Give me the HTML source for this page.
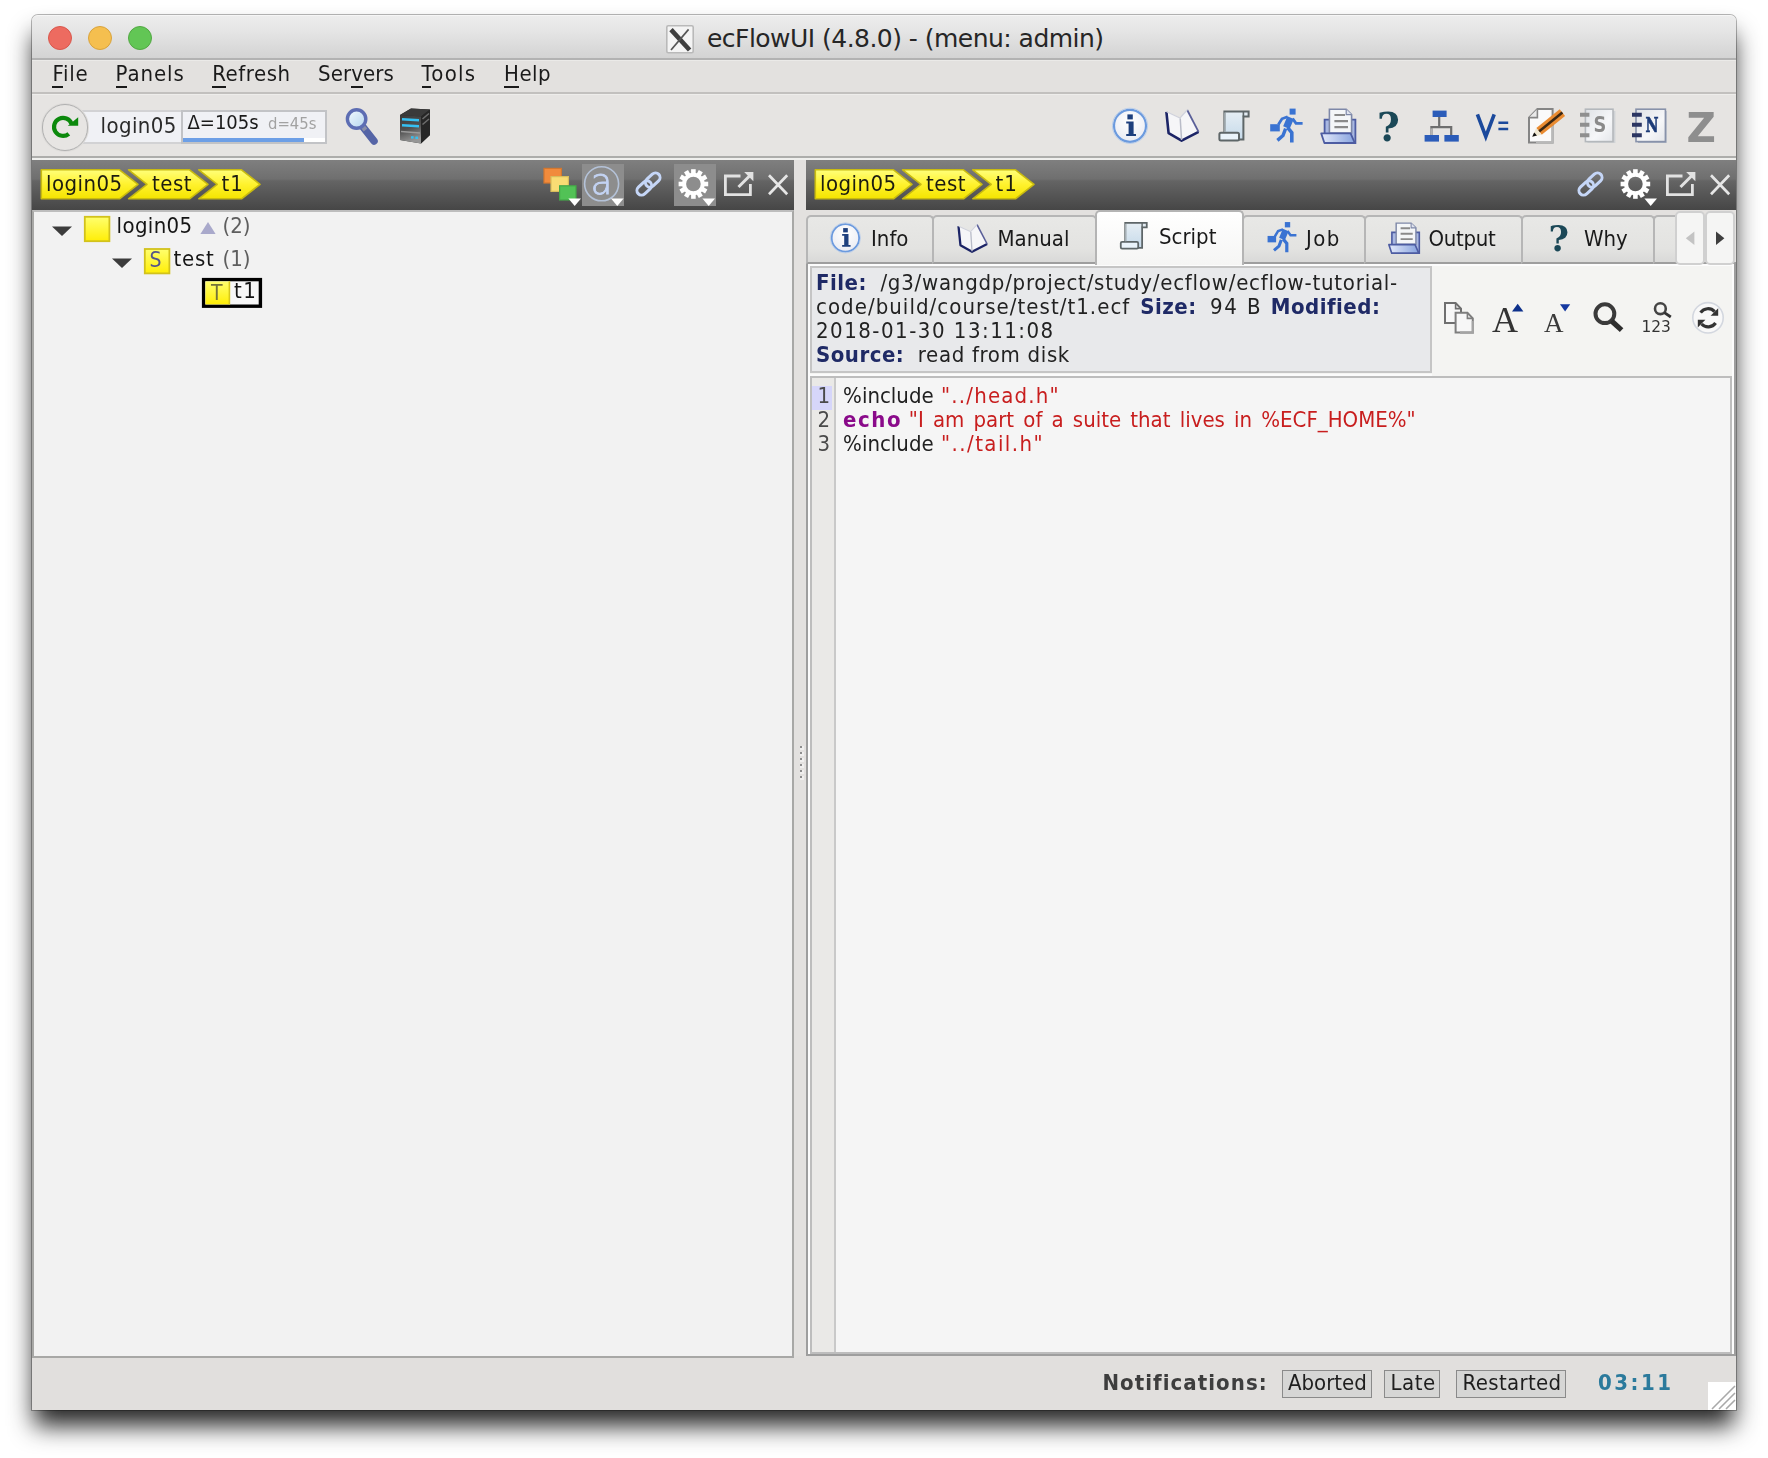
<!DOCTYPE html>
<html lang="en">
<head>
<meta charset="utf-8">
<title>ecFlowUI (4.8.0) - (menu: admin)</title>
<style>
*{box-sizing:border-box;margin:0;padding:0}
html,body{width:1768px;height:1458px;background:#fff;overflow:hidden}
body{position:relative;font-family:"DejaVu Sans Condensed","DejaVu Sans","Liberation Sans",sans-serif;font-size:22px;color:#1a1a1a}
.a{position:absolute}
.t,svg{filter:blur(.6px)}
#ttext{filter:none}
.t{position:absolute;white-space:pre;line-height:normal}
#win{position:absolute;left:32px;top:15px;width:1704px;height:1395px;background:#e3e1df;border-radius:6px 6px 0 0;
 box-shadow:0 17.5px 24px -2px rgba(0,0,0,.85),0 0 0 1px rgba(0,0,0,.28)}
#x{position:absolute;left:-32px;top:-15px;width:1768px;height:1458px}
#title{position:absolute;left:32px;top:15px;width:1704px;height:43px;border-radius:6px 6px 0 0;
 background:linear-gradient(#ededed,#e4e4e4 40%,#d3d3d3);border-top:1px solid #f6f6f6}
#titleline{left:32px;top:58px;width:1704px;height:2px;background:#b2b2b2}
.tl{position:absolute;top:26px;width:24px;height:24px;border-radius:50%}
#menubar{left:32px;top:60px;width:1704px;height:32px;background:#e3e1df;border-top:1px solid #ebeae8}
#menuline{left:32px;top:92px;width:1704px;height:2px;background:#c2c0be}
#toolbar{left:32px;top:94px;width:1704px;height:62px;background:#e6e4e2;border-top:1px solid #eeedeb}
#toolline{left:32px;top:156px;width:1704px;height:2px;background:#adadab}
#toolline2{left:32px;top:158px;width:1704px;height:2px;background:#efefed}
.hdr{position:absolute;top:160px;height:50px;background:linear-gradient(#7f7f7f,#6f6f6f 38%,#646464 42%,#464646)}
.tab{position:absolute;top:215px;height:49px;background:linear-gradient(#e8e8e6,#e3e3e1 70%,#d9d9d8);border:2px solid #b6b6b6;border-bottom:2px solid #9e9e9e;border-radius:5px 5px 0 0}
.info{line-height:24px;color:#222}
.info b{color:#1f2a66;letter-spacing:.5px}
.code{line-height:24px;color:#202020}
.code i{font-style:normal;color:#c81e1e}
.code b{color:#8a0a8a}
.btn{top:1370px;height:28px;background:#d6d6d5;border:1.5px solid #8a8a8a}
.menu u{text-decoration:none;border-bottom:2px solid #1a1a1a;padding-bottom:0}
</style>
</head>
<body>
<div id="win"><div id="x">

<!-- TITLE BAR -->
<div id="title"></div>
<div class="a" id="titleline"></div>
<div class="tl" style="left:48px;background:#ed6b60;border:1px solid #d9574c"></div>
<div class="tl" style="left:88px;background:#f5bf4f;border:1px solid #d9a33c"></div>
<div class="tl" style="left:128px;background:#62c655;border:1px solid #52a843"></div>
<svg class="a" style="left:664px;top:23px" width="32" height="32" viewBox="664 23 32 32"><rect x="666.8" y="25.8" width="26.4" height="27" rx="1.5" fill="#f4f4f4" stroke="#b9b9b9" stroke-width="1.6"/><path d="M671 29.6L689.6 50" stroke="#3e3e3e" stroke-width="4.6"/><path d="M688.6 29.4L671 50" stroke="#555" stroke-width="1.7"/></svg>
<div class="t" id="ttext" style="font-family:'DejaVu Sans','Liberation Sans',sans-serif;left:707px;top:24px;font-size:25px;letter-spacing:-.53px;color:#262626">ecFlowUI (4.8.0) - (menu: admin)</div>

<!-- MENU BAR -->
<div class="a" id="menubar"></div>
<div class="a" id="menuline"></div>
<div class="t menu" style="left:52.4px;top:61px;letter-spacing:.8px"><u>F</u>ile</div>
<div class="t menu" style="left:115.6px;top:61px;letter-spacing:.9px"><u>P</u>anels</div>
<div class="t menu" style="left:212.2px;top:61px;letter-spacing:.55px"><u>R</u>efresh</div>
<div class="t menu" style="left:318px;top:61px;letter-spacing:.1px">Ser<u>v</u>ers</div>
<div class="t menu" style="left:421.6px;top:61px;letter-spacing:1.3px"><u>T</u>ools</div>
<div class="t menu" style="left:504px;top:61px;letter-spacing:.5px"><u>H</u>elp</div>

<!-- TOOLBAR -->
<div class="a" id="toolbar"></div>
<div class="a" id="toolline"></div>
<div class="a" id="toolline2"></div>
<!-- server widget -->
<div class="a" style="left:76px;top:110px;width:107px;height:34px;background:#f0f1f5;border:2px solid #d2d2d4;border-right:none"></div>
<div class="a" style="left:181px;top:110px;width:146px;height:34px;background:#f0f1f5;border:2px solid #c2c3c6"></div>
<div class="a" style="left:183px;top:138px;width:142px;height:4px;background:#fff"></div>
<div class="a" style="left:183px;top:138px;width:121px;height:4px;background:#6d9fe6"></div>
<div class="a" style="left:41.6px;top:104.4px;width:46.6px;height:46.6px;border-radius:50%;background:#e7e5e3;border:1.7px solid #b0b0b0;box-shadow:0 0 0 1px #dddbd9"></div>
<svg class="a" style="left:48px;top:110px" width="34" height="34" viewBox="48 110 34 34"><path d="M71.5 123.8A9 9 0 1 0 68.8 133.8" fill="none" stroke="#0c890c" stroke-width="4.2"/><path d="M67.8 125.8H78.2V117.2Z" fill="#0c890c"/></svg>
<div class="t" style="left:100.6px;top:113px;color:#2a2a2a;letter-spacing:.4px">login05</div>
<div class="t" style="left:187.5px;top:110px;font-size:20px;color:#1a1a1a">Δ=105s</div>
<div class="t" style="left:268px;top:114px;font-size:16.5px;color:#a2a2a2">d=45s</div>
<!-- search icon -->
<svg class="a" style="left:342px;top:105px" width="40" height="42" viewBox="0 0 40 42">
<defs><linearGradient id="lens" x1="0" y1="0" x2="1" y2="1"><stop offset="0" stop-color="#f4fbff"/><stop offset="1" stop-color="#b4d4ee"/></linearGradient></defs>
<path d="M21 22L32 36" stroke="#5564a6" stroke-width="7.5" stroke-linecap="round"/>
<path d="M19 19.5L23.5 25" stroke="#8a8fa8" stroke-width="4.5"/>
<circle cx="14.6" cy="14" r="9.2" fill="url(#lens)" stroke="#5d6db3" stroke-width="3.4"/>
</svg>
<!-- server icon -->
<svg class="a" style="left:397px;top:106px" width="36" height="40" viewBox="0 0 36 40">
<defs><linearGradient id="srvf" x1="0" y1="0" x2=".25" y2="1"><stop offset="0" stop-color="#383838"/><stop offset=".55" stop-color="#505050"/><stop offset="1" stop-color="#969696"/></linearGradient></defs>
<path d="M3 9L14 2.5L33 3.5L33 29L24 37.5L3 34Z" fill="#2b2b2b"/>
<path d="M3 9L24 10.5L24 37.5L3 34Z" fill="url(#srvf)"/>
<path d="M3 9L14 2.5L33 3.5L24 10.5Z" fill="#3a3a3a"/>
<path d="M24 10.5L33 3.5L33 29L24 37.5Z" fill="#262626"/>
<path d="M5 13.2L22 14.2" stroke="#35c0f2" stroke-width="2.4"/>
<path d="M5 19.2L22 20.2" stroke="#35c0f2" stroke-width="2.4"/>
<path d="M4 25.5L23 27" stroke="#9a9a9a" stroke-width="1.6"/>
<path d="M25.5 13L32 7.5M25.5 18.5L32 13" stroke="#6c6c6c" stroke-width="1.6"/>
<rect x="14" y="30.2" width="2.6" height="2.4" fill="#35c0f2"/><rect x="18.4" y="30.6" width="2.6" height="2.4" fill="#35c0f2"/>
</svg>

<!-- toolbar right icons -->
<svg class="a" style="left:1100px;top:100px" width="630" height="52" viewBox="1100 100 630 52">
<defs>
<radialGradient id="ig" cx=".5" cy=".35" r=".7"><stop offset="0" stop-color="#ffffff"/><stop offset="1" stop-color="#e8eaf2"/></radialGradient>
<linearGradient id="scr" x1="0" y1="0" x2="0" y2="1"><stop offset="0" stop-color="#e6eef4"/><stop offset="1" stop-color="#c6daea"/></linearGradient>
<linearGradient id="tray" x1="0" y1="0" x2="1" y2="0"><stop offset="0" stop-color="#e4eafa"/><stop offset="1" stop-color="#86a2de"/></linearGradient>
<linearGradient id="nb" x1="0" y1="0" x2="1" y2="1"><stop offset="0" stop-color="#dfe2e6"/><stop offset=".6" stop-color="#f6f7f9"/><stop offset="1" stop-color="#e4e6ea"/></linearGradient>
</defs>
<!-- info -->
<g id="i-info"><circle cx="1130" cy="125.8" r="16" fill="url(#ig)" stroke="#6b9ade" stroke-width="2.2"/><circle cx="1130" cy="125.8" r="17.6" fill="none" stroke="#b9cdea" stroke-width="1"/>
<rect x="1127.4" y="114.4" width="5.4" height="5" fill="#1d3f7d"/><path d="M1126.2 121.4H1133.6V134H1136V136H1126.2V134H1128.6V123.4H1126.2Z" fill="#1d3f7d"/></g>
<!-- manual/book -->
<g id="i-book"><path d="M1166.2 111.6L1180 118L1187.2 109.6L1198.8 132.2L1181.6 141L1168 133.4Z" fill="#f6f6f8"/>
<path d="M1166.4 111.8L1168.6 133.2L1181.6 140.6L1198.6 131.8" fill="none" stroke="#1c2466" stroke-width="2.6" stroke-linejoin="round"/>
<path d="M1198.6 131.8L1187.2 110" stroke="#5a5f98" stroke-width="1.8"/><path d="M1180.2 118.4L1181.6 140" stroke="#b9bcc8" stroke-width="1.5"/><path d="M1166.6 111.8L1180 118L1187.2 110" fill="none" stroke="#d0d2dc" stroke-width="1.2"/></g>
<!-- script -->
<g id="i-script"><path d="M1224.4 111.4H1248.6V116.4H1243.4V139.6H1224.4Z" fill="url(#scr)" stroke="#5e6668" stroke-width="2"/><path d="M1243.4 116.4V111.4" stroke="#5e6668" stroke-width="1.6"/>
<rect x="1219.4" y="132.8" width="19.6" height="7.6" rx="1.5" fill="#eaf3fa" stroke="#5e6668" stroke-width="2"/><path d="M1225 112.4V132" stroke="#a9b3b8" stroke-width="1.6"/></g>
<!-- job/runner -->
<g id="i-run" fill="#3a73d2" stroke="#3a73d2"><rect x="1289.6" y="108.6" width="6" height="6" stroke="none"/>
<path d="M1290.6 117.6L1286.4 127.6" stroke-width="7" fill="none"/><path d="M1292.6 118.6L1296 123.4H1302.6" stroke-width="2.8" fill="none"/><path d="M1287.6 116.8L1282 118.8L1278.4 124.6" stroke-width="2.8" fill="none"/>
<rect x="1270.2" y="124.2" width="9.6" height="7.2" stroke="none"/><path d="M1287.6 127.6L1291.8 132.6V142.6" stroke-width="3.6" fill="none"/><path d="M1285.6 128.6L1283 135.6L1277.4 140.4" stroke-width="3.4" fill="none"/></g>
<!-- output -->
<g id="i-out"><path d="M1324.6 134V119.6H1355.4V143H1352" fill="#a9b8e2" stroke="#4d5ca2" stroke-width="1.8"/>
<path d="M1329.4 109.2H1346.2L1351.6 114.6V133H1329.4Z" fill="#f4f6f8" stroke="#7e88a8" stroke-width="1.6"/><path d="M1346.2 109.2V114.6H1351.6" fill="#dfe3ee" stroke="#7e88a8" stroke-width="1.2"/>
<path d="M1334.4 115H1345M1334.4 121.2H1348M1334.4 127.2H1348" stroke="#8a8a8a" stroke-width="2.2"/>
<path d="M1321.2 133.4H1350.6L1354.8 143H1324.4Z" fill="url(#tray)" stroke="#4d5ca2" stroke-width="1.8" stroke-linejoin="round"/></g>
<text x="1377" y="141.4" font-family="DejaVu Serif, Liberation Serif, serif" font-weight="bold" font-size="39" fill="#1b4857">?</text>
<!-- tree -->
<g id="i-tree"><path d="M1439.2 116V127.2M1431.4 135V127.2H1451.2V135" fill="none" stroke="#6e6e6e" stroke-width="2.2"/><path d="M1431.4 135V128.4" stroke="#b4b4b4" stroke-width="2.2"/>
<rect x="1432.6" y="110.6" width="14" height="6.4" fill="#2b5cb9"/><rect x="1424.6" y="135" width="14.4" height="6.6" fill="#2b5cb9"/><rect x="1444.4" y="135" width="14.4" height="6.6" fill="#2b5cb9"/></g>
<!-- V= -->
<path d="M1477.4 114.4L1485.8 136.6L1494.2 114.4" fill="none" stroke="#1b499c" stroke-width="3.6" stroke-linejoin="miter"/><path d="M1498.4 122.8H1508.2M1498.4 129H1508.2" stroke="#1b499c" stroke-width="2.6"/>
<!-- edit -->
<g id="i-edit"><path d="M1537.4 109H1552.6V142.4H1529V117.6Z" fill="#fafafa" stroke="#858585" stroke-width="2"/><path d="M1537.4 109V117.6H1529" fill="#e9e9e9" stroke="#858585" stroke-width="1.6"/>
<path d="M1552.6 126V142.4H1536" fill="none" stroke="#b9b9b9" stroke-width="2.4"/>
<path d="M1539 131.4L1562.4 112.6" stroke="#e98b31" stroke-width="8.6"/><path d="M1539 131.4L1562.4 112.6" stroke="#3c2814" stroke-width="2.6"/>
<path d="M1532.2 136.8L1536.2 128L1541.8 134.8Z" fill="#f0e8d2"/><path d="M1532.2 136.8L1534.2 132.4L1537 135.6Z" fill="#111"/></g>
<!-- S notebook -->
<g id="i-snb"><rect x="1587.4" y="111" width="28" height="32" fill="#d0d3d6"/><rect x="1585.4" y="109.2" width="27.6" height="32.4" fill="url(#nb)" stroke="#b4b8bc" stroke-width="1.6"/>
<path d="M1580 114.8H1589.4M1580 124.8H1589.4M1580 135.2H1589.4" stroke="#8f8f8f" stroke-width="4"/></g>
<text x="1593.4" y="131.8" font-family="DejaVu Sans, Liberation Sans, sans-serif" font-weight="bold" font-size="21" fill="#8a8a8a" textLength="12.8" lengthAdjust="spacingAndGlyphs">S</text>
<!-- N notebook -->
<g id="i-nnb"><rect x="1638" y="111" width="28.6" height="32" fill="#aab2c2"/><rect x="1636" y="109.2" width="29.4" height="32.4" fill="url(#nb)" stroke="#8892aa" stroke-width="1.6"/>
<path d="M1632 114.8H1641.8M1632 124.8H1641.8M1632 135.2H1641.8" stroke="#2b3562" stroke-width="4"/></g>
<text x="1645.4" y="131.8" font-family="DejaVu Serif, Liberation Serif, serif" font-weight="bold" font-size="21" fill="#1c3b78" stroke="#1c3b78" stroke-width=".7" textLength="13" lengthAdjust="spacingAndGlyphs">N</text>
<text x="1686.6" y="141.6" font-family="DejaVu Sans, Liberation Sans, sans-serif" font-weight="bold" font-size="40" fill="#8e8e8e" textLength="29.4" lengthAdjust="spacingAndGlyphs">Z</text>
</svg>

<!-- LEFT PANEL -->
<div class="hdr" style="left:32px;width:762px"></div>
<div class="a" style="left:32px;top:210px;width:762px;height:1148px;background:#f2f2f2;border:2px solid #a8a8a6;border-top:2px solid #bdbdbd"></div>
<!-- left breadcrumbs -->
<svg class="a" style="left:32px;top:160px" width="260" height="50" viewBox="32 160 260 50">
<defs><linearGradient id="yg" x1="0" y1="0" x2="0" y2="1"><stop offset="0" stop-color="#ffff7a"/><stop offset=".5" stop-color="#fff22e"/><stop offset="1" stop-color="#f4e400"/></linearGradient></defs>
<g fill="url(#yg)" stroke="#c9bb10" stroke-width="1.6" stroke-linejoin="round">
<path d="M41.3 169.8H119.5L138 184.3L119.5 198.8H41.3Z"/>
<path d="M128.6 169.8H189.5L208 184.3L189.5 198.8H128.6L147 184.3Z"/>
<path d="M198.8 169.8H241.5L260 184.3L241.5 198.8H198.8L217.2 184.3Z"/>
</g></svg>
<div class="t" style="left:46px;top:171px;color:#1c1c10;letter-spacing:.45px">login05</div>
<div class="t" style="left:152px;top:171px;color:#1c1c10;letter-spacing:.5px">test</div>
<div class="t" style="left:221.6px;top:171px;color:#1c1c10;letter-spacing:1px">t1</div>
<!-- left header icons -->
<svg class="a" style="left:540px;top:160px" width="254" height="50" viewBox="0 0 254 50">
<rect x="42" y="4" width="42" height="42" fill="#8d8d8d"/>
<rect x="134" y="4" width="42" height="42" fill="#8d8d8d"/>
<rect x="4" y="8.4" width="17.4" height="14.6" fill="#f18b3c" stroke="#d4772e" stroke-width="1.2"/>
<rect x="11" y="16.6" width="17.4" height="14.8" fill="#f9dc74" stroke="#d8bc5c" stroke-width="1.2"/>
<rect x="19.6" y="25.8" width="16.4" height="14.2" fill="#52c256" stroke="#44a648" stroke-width="1.2"/>
<path d="M28.4 38.6H41L34.7 46Z" fill="#fff"/>
<circle cx="61.6" cy="23.8" r="17" fill="none" stroke="#b4c2d8" stroke-width="1.6"/>
<text x="61.4" y="34" font-family="DejaVu Sans, Liberation Sans, sans-serif" font-weight="200" font-size="35" fill="#c3d3f3" stroke="#c3d3f3" stroke-width=".9" text-anchor="middle">a</text>
<path d="M71 38.6H83.6L77.3 46Z" fill="#fff"/>
<g fill="none" stroke="#c5d6f7" stroke-width="3" transform="rotate(-43 108.5 24)"><rect x="94.4" y="19.4" width="16.6" height="9.2" rx="4.6"/><rect x="106" y="19.4" width="16.6" height="9.2" rx="4.6"/></g>
<g transform="translate(153.4 24)"><g fill="#fff"><rect x="-2.3" y="-14.8" width="4.6" height="5.6" transform="rotate(0)"/><rect x="-2.3" y="-14.8" width="4.6" height="5.6" transform="rotate(30)"/><rect x="-2.3" y="-14.8" width="4.6" height="5.6" transform="rotate(60)"/><rect x="-2.3" y="-14.8" width="4.6" height="5.6" transform="rotate(90)"/><rect x="-2.3" y="-14.8" width="4.6" height="5.6" transform="rotate(120)"/><rect x="-2.3" y="-14.8" width="4.6" height="5.6" transform="rotate(150)"/><rect x="-2.3" y="-14.8" width="4.6" height="5.6" transform="rotate(180)"/><rect x="-2.3" y="-14.8" width="4.6" height="5.6" transform="rotate(210)"/><rect x="-2.3" y="-14.8" width="4.6" height="5.6" transform="rotate(240)"/><rect x="-2.3" y="-14.8" width="4.6" height="5.6" transform="rotate(270)"/><rect x="-2.3" y="-14.8" width="4.6" height="5.6" transform="rotate(300)"/><rect x="-2.3" y="-14.8" width="4.6" height="5.6" transform="rotate(330)"/></g><circle r="9.3" fill="none" stroke="#fff" stroke-width="4"/></g>
<path d="M162.4 38.6H175L168.7 46Z" fill="#fff"/>
<path d="M200.5 16H185.4V34.6H210.4V24" fill="none" stroke="#e2e2e2" stroke-width="2.8"/>
<path d="M198.5 27L210 15.5" stroke="#e2e2e2" stroke-width="3"/><path d="M204.2 12H213.4V21.2Z" fill="#e2e2e2"/>
<path d="M229 15.2L247.2 34.2M247.2 15.2L229 34.2" stroke="#e6e6e6" stroke-width="2.7"/>
</svg>
<!-- tree -->
<svg class="a" style="left:32px;top:212px" width="300" height="100" viewBox="32 212 300 100">
<defs><linearGradient id="yg2" x1="0" y1="0" x2="0" y2="1"><stop offset="0" stop-color="#ffff6e"/><stop offset="1" stop-color="#ffee06"/></linearGradient></defs>
<path d="M52 226.4H72L62 236Z" fill="#3c3c3c"/>
<path d="M112 258.4H132L122 268Z" fill="#3c3c3c"/>
<rect x="84.8" y="216.8" width="24.6" height="24.4" fill="url(#yg2)" stroke="#d2c21c" stroke-width="1.8"/>
<rect x="144.8" y="249" width="24.6" height="24.4" fill="url(#yg2)" stroke="#d2c21c" stroke-width="1.8"/>
<path d="M200.4 234L208 222L215.6 234Z" fill="#a9a9cb"/>
<rect x="203.6" y="279.6" width="56.8" height="26.6" fill="#f7f7f7" stroke="#000" stroke-width="3.4"/>
<rect x="205.4" y="281.4" width="24.6" height="23" fill="url(#yg2)"/>
<rect x="228.6" y="281.4" width="1.6" height="23" fill="#d8c81c"/>
</svg>
<div class="t" style="left:116.6px;top:213px;color:#141414;letter-spacing:.35px">login05</div>
<div class="t" style="left:222.5px;top:213px;color:#5e5e5e">(2)</div>
<div class="t" style="left:149.5px;top:247.6px;font-size:21px;color:#55558a">S</div>
<div class="t" style="left:173.6px;top:245.5px;color:#141414;letter-spacing:.7px">test</div>
<div class="t" style="left:222.5px;top:245.5px;color:#5e5e5e">(1)</div>
<div class="t" style="left:211px;top:280.6px;font-size:21px;color:#74723a">T</div>
<div class="t" style="left:234px;top:277.5px;color:#141414;letter-spacing:1.6px">t1</div>

<svg class="a" style="left:800px;top:746px" width="4" height="36" viewBox="0 0 4 36"><rect x="0" y="0" width="4" height="4" fill="#f0efee"/><rect x="0" y="0" width="2" height="2" fill="#8e8e8e"/><rect x="0" y="6" width="4" height="4" fill="#f0efee"/><rect x="0" y="6" width="2" height="2" fill="#8e8e8e"/><rect x="0" y="12" width="4" height="4" fill="#f0efee"/><rect x="0" y="12" width="2" height="2" fill="#8e8e8e"/><rect x="0" y="18" width="4" height="4" fill="#f0efee"/><rect x="0" y="18" width="2" height="2" fill="#8e8e8e"/><rect x="0" y="24" width="4" height="4" fill="#f0efee"/><rect x="0" y="24" width="2" height="2" fill="#8e8e8e"/><rect x="0" y="30" width="4" height="4" fill="#f0efee"/><rect x="0" y="30" width="2" height="2" fill="#8e8e8e"/></svg>
<!-- RIGHT PANEL -->
<div class="hdr" style="left:806px;width:930px"></div>
<div class="a" style="left:806px;top:262px;width:930px;height:1094px;background:#f4f4f2;border:2px solid #9e9e9e;box-shadow:inset 2px 2px 0 #fcfcfc,inset -2px 0 0 #fcfcfc"></div>
<!-- right breadcrumbs -->
<svg class="a" style="left:806px;top:160px" width="260" height="50" viewBox="32 160 260 50">
<g fill="url(#yg)" stroke="#c9bb10" stroke-width="1.6" stroke-linejoin="round">
<path d="M41.3 169.8H119.5L138 184.3L119.5 198.8H41.3Z"/>
<path d="M128.6 169.8H189.5L208 184.3L189.5 198.8H128.6L147 184.3Z"/>
<path d="M198.8 169.8H241.5L260 184.3L241.5 198.8H198.8L217.2 184.3Z"/>
</g></svg>
<div class="t" style="left:820px;top:171px;color:#1c1c10;letter-spacing:.45px">login05</div>
<div class="t" style="left:926px;top:171px;color:#1c1c10;letter-spacing:.5px">test</div>
<div class="t" style="left:995.6px;top:171px;color:#1c1c10;letter-spacing:1px">t1</div>
<!-- right header icons -->
<svg class="a" style="left:1482px;top:160px" width="254" height="50" viewBox="0 0 254 50">
<g fill="none" stroke="#c5d6f7" stroke-width="3" transform="rotate(-43 108.5 24)"><rect x="94.4" y="19.4" width="16.6" height="9.2" rx="4.6"/><rect x="106" y="19.4" width="16.6" height="9.2" rx="4.6"/></g>
<g transform="translate(153.4 24)"><g fill="#fff"><rect x="-2.3" y="-14.8" width="4.6" height="5.6" transform="rotate(0)"/><rect x="-2.3" y="-14.8" width="4.6" height="5.6" transform="rotate(30)"/><rect x="-2.3" y="-14.8" width="4.6" height="5.6" transform="rotate(60)"/><rect x="-2.3" y="-14.8" width="4.6" height="5.6" transform="rotate(90)"/><rect x="-2.3" y="-14.8" width="4.6" height="5.6" transform="rotate(120)"/><rect x="-2.3" y="-14.8" width="4.6" height="5.6" transform="rotate(150)"/><rect x="-2.3" y="-14.8" width="4.6" height="5.6" transform="rotate(180)"/><rect x="-2.3" y="-14.8" width="4.6" height="5.6" transform="rotate(210)"/><rect x="-2.3" y="-14.8" width="4.6" height="5.6" transform="rotate(240)"/><rect x="-2.3" y="-14.8" width="4.6" height="5.6" transform="rotate(270)"/><rect x="-2.3" y="-14.8" width="4.6" height="5.6" transform="rotate(300)"/><rect x="-2.3" y="-14.8" width="4.6" height="5.6" transform="rotate(330)"/></g><circle r="9.3" fill="none" stroke="#fff" stroke-width="4"/></g>
<path d="M162.4 38.6H175L168.7 46Z" fill="#fff"/>
<path d="M200.5 16H185.4V34.6H210.4V24" fill="none" stroke="#e2e2e2" stroke-width="2.8"/>
<path d="M198.5 27L210 15.5" stroke="#e2e2e2" stroke-width="3"/><path d="M204.2 12H213.4V21.2Z" fill="#e2e2e2"/>
<path d="M229 15.2L247.2 34.2M247.2 15.2L229 34.2" stroke="#e6e6e6" stroke-width="2.7"/>
</svg>
<!-- tabs -->
<div class="tab" style="left:806px;width:128px"></div>
<div class="tab" style="left:932px;width:165px"></div>
<div class="tab" style="left:1242px;width:124px"></div>
<div class="tab" style="left:1364px;width:159px"></div>
<div class="tab" style="left:1521px;width:134px"></div>
<div class="tab" style="left:1653px;width:40px;border-right:none"></div>
<div class="a" style="left:1095px;top:210px;width:149px;height:55px;background:linear-gradient(#ffffff,#f5f5f4);border:2px solid #b4b4b4;border-bottom:none;border-radius:5px 5px 0 0"></div>
<div class="a" style="left:1675px;top:211px;width:30px;height:54px;background:#f5f5f4;border:2px solid #d0d0d0;border-radius:5px"></div>
<div class="a" style="left:1705px;top:211px;width:30px;height:54px;background:#f5f5f4;border:2px solid #d0d0d0;border-radius:5px"></div>
<svg class="a" style="left:1675px;top:211px" width="60" height="54" viewBox="1675 211 60 54"><path d="M1694.4 231.6V245L1685.8 238.3Z" fill="#c3c3c3"/><path d="M1716 231.6V245L1724.4 238.3Z" fill="#3e3e3e"/></svg>
<div class="t" style="left:871px;top:226px">Info</div>
<div class="t" style="left:997.5px;top:226px">Manual</div>
<div class="t" style="left:1159px;top:223.5px">Script</div>
<div class="t" style="left:1306px;top:226px;letter-spacing:1.4px">Job</div>
<div class="t" style="left:1428.6px;top:226px;letter-spacing:-.3px">Output</div>
<div class="t" style="left:1584px;top:226px">Why</div>
<!-- tab icons -->
<svg class="a" style="left:806px;top:210px" width="930" height="56" viewBox="806 210 930 56">
<use href="#i-info" transform="translate(-126.4 129.7) scale(.86)"/>
<use href="#i-book" transform="translate(-79.6 126.7) scale(.89)"/>
<use href="#i-script" transform="translate(35.5 123.7) scale(.89)"/>
<use href="#i-run" transform="translate(137.1 125.4) scale(.89)"/>
<use href="#i-out" transform="translate(213 125.9) scale(.89)"/>
<text x="1548.4" y="250.8" font-family="DejaVu Serif, Liberation Serif, serif" font-weight="bold" font-size="35" fill="#1b4857">?</text>
</svg>
<!-- editor toolbar icons -->
<svg class="a" style="left:1436px;top:296px" width="296" height="44" viewBox="1436 296 296 44">
<path d="M1445 303H1455.6L1461 308.6V323H1445Z" fill="#f7f7f7" stroke="#6f6f6f" stroke-width="2"/><path d="M1455.6 303V308.6H1461" fill="none" stroke="#6f6f6f" stroke-width="1.6"/>
<path d="M1455.6 312.8H1467.4L1472.8 318.4V332.6H1455.6Z" fill="#f7f7f7" stroke="#7e7e7e" stroke-width="2"/><path d="M1467.4 312.8V318.4H1472.8" fill="none" stroke="#7e7e7e" stroke-width="1.6"/>
<path d="M1472.8 321V332.6H1460" fill="none" stroke="#a4a4a4" stroke-width="2.2"/>
<text x="1492" y="331.6" font-family="Liberation Serif, DejaVu Serif, serif" font-size="36" fill="#333">A</text>
<path d="M1512 311.4H1523.4L1517.7 303.8Z" fill="#0d308b"/>
<text x="1544" y="331.6" font-family="Liberation Serif, DejaVu Serif, serif" font-size="27" fill="#3a3a3a">A</text>
<path d="M1560 304.2H1570.2L1565.1 311.6Z" fill="#1438a0"/>
<circle cx="1604.9" cy="313.7" r="9.4" fill="none" stroke="#3a3a3a" stroke-width="4"/><path d="M1611.6 321L1621.6 330.2" stroke="#2e2e2e" stroke-width="5.2"/>
<circle cx="1660.4" cy="308.7" r="5.4" fill="none" stroke="#444" stroke-width="2.6"/><path d="M1664.4 312.6L1670.8 317" stroke="#333" stroke-width="2.8"/>
<text x="1641.4" y="331.8" font-family="DejaVu Sans, Liberation Sans, sans-serif" font-size="16" fill="#333" textLength="29.4" lengthAdjust="spacingAndGlyphs">123</text>
<circle cx="1708" cy="317.8" r="15.2" fill="#f8f8f8" stroke="#d3d7df" stroke-width="1.6"/>
<path d="M1700.6 312.6A9 9 0 0 1 1714.6 311.6" fill="none" stroke="#333" stroke-width="3.2"/><path d="M1710.6 315.8H1718.2V308.2Z" fill="#333"/>
<path d="M1715.6 323A9 9 0 0 1 1701.6 324" fill="none" stroke="#333" stroke-width="3.2"/><path d="M1705.4 319.8H1697.8V327.4Z" fill="#333"/>
</svg>
<!-- file info -->
<div class="a" style="left:810px;top:266px;width:622px;height:107px;background:#e8e9eb;border:2px solid #c5c5c5"></div>
<div class="t info" style="left:816px;top:270.5px;letter-spacing:1px"><b>File:</b></div>
<div class="t info" style="left:880.4px;top:270.5px;letter-spacing:.77px">/g3/wangdp/project/study/ecflow/ecflow-tutorial-</div>
<div class="t info" style="left:816px;top:294.5px;letter-spacing:1.05px">code/build/course/test/t1.ecf</div>
<div class="t info" style="left:1140.3px;top:294.5px;letter-spacing:1.1px"><b>Size:</b></div>
<div class="t info" style="left:1210px;top:294.5px;letter-spacing:1.6px">94</div>
<div class="t info" style="left:1247px;top:294.5px">B</div>
<div class="t info" style="left:1270.7px;top:294.5px;letter-spacing:.9px"><b>Modified:</b></div>
<div class="t info" style="left:816px;top:318.5px;letter-spacing:1.5px">2018-01-30 13:11:08</div>
<div class="t info" style="left:816px;top:342.5px;letter-spacing:1px"><b>Source:</b></div>
<div class="t info" style="left:917.8px;top:342.5px;letter-spacing:.66px">read from disk</div>
<!-- editor -->
<div class="a" style="left:810px;top:376px;width:922px;height:978px;background:#f5f5f5;border:2px solid #bdbdbd"></div>
<div class="a" style="left:812px;top:378px;width:24px;height:974px;background:#eae9e7;border-right:2px solid #c9c9c9"></div>
<div class="a" style="left:812px;top:386px;width:20px;height:24px;background:#d6d6fa"></div>
<div class="a" style="left:810px;top:374px;width:622px;height:2px;background:#fbfbfb"></div>
<div class="t code" style="left:817.5px;top:383.5px;color:#4a4a4a">1
2
3</div>
<div class="t code" style="left:843.1px;top:383.5px">%include</div>
<div class="t code" style="left:941px;top:383.5px;letter-spacing:1.2px"><i>"../head.h"</i></div>
<div class="t code" style="left:843px;top:407.5px;letter-spacing:1.6px"><b>echo</b></div>
<div class="t code" style="left:908.8px;top:407.5px;word-spacing:2.9px"><i>"I am part of a suite that lives in %ECF_HOME%"</i></div>
<div class="t code" style="left:843.1px;top:431.5px">%include</div>
<div class="t code" style="left:941px;top:431.5px;letter-spacing:1.45px"><i>"../tail.h"</i></div>

<!-- STATUS BAR -->
<div class="a" style="left:32px;top:1356px;width:1704px;height:54px;background:#e1dfdd"></div>
<div class="a" style="left:32px;top:1356px;width:762px;height:2px;background:#a8a8a6"></div>
<div class="t" style="left:1102.5px;top:1369.5px;font-weight:bold;color:#3e3e3e;letter-spacing:1.05px">Notifications:</div>
<div class="a btn" style="left:1282px;width:90px"></div>
<div class="a btn" style="left:1384px;width:56px"></div>
<div class="a btn" style="left:1456px;width:110px"></div>
<div class="t" style="left:1288px;top:1369.5px;color:#1e1e1e">Aborted</div>
<div class="t" style="left:1390.5px;top:1369.5px;color:#1e1e1e;letter-spacing:.5px">Late</div>
<div class="t" style="left:1462.6px;top:1369.5px;color:#1e1e1e;letter-spacing:.35px">Restarted</div>
<div class="t" style="left:1598px;top:1369.5px;font-weight:bold;color:#2b7a9c;letter-spacing:2.5px">03:11</div>
<div class="a" style="left:1708px;top:1382px;width:28px;height:28px;background:#fff"></div>
<svg class="a" style="left:1708px;top:1382px" width="28" height="28" viewBox="0 0 28 28"><path d="M4 27L27 4M11 27L27 11M18 27L27 18" stroke="#a9a9a9" stroke-width="1.6"/></svg>

</div></div>
</body>
</html>
